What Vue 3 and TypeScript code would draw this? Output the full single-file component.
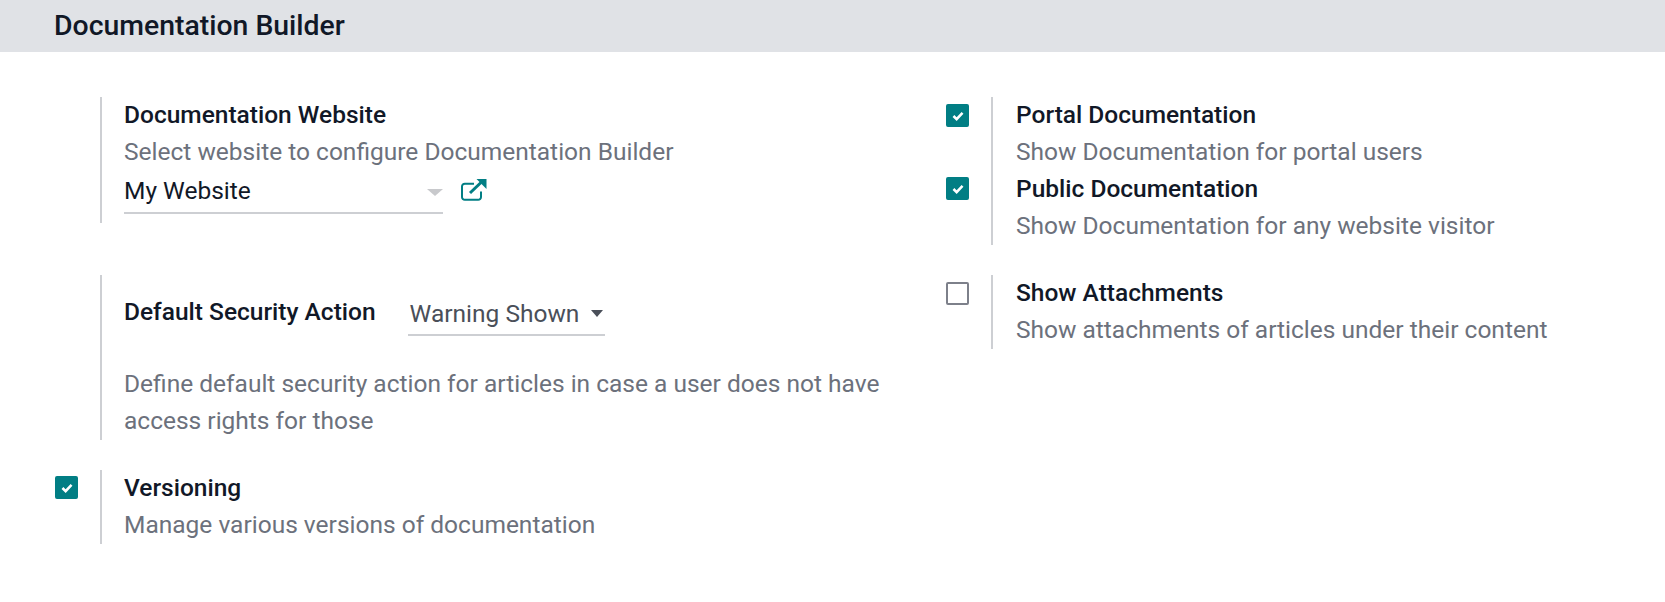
<script setup lang="ts">
interface Setting {
  label: string;
  help: string;
  checked: boolean;
}

const portalSettings: Setting[] = [
  { label: "Portal Documentation", help: "Show Documentation for portal users", checked: true },
  { label: "Public Documentation", help: "Show Documentation for any website visitor", checked: true },
];
</script>

<template>
  <div class="page">
    <h2 class="section-title">Documentation Builder</h2>
    <div class="settings">
      <div class="box">
        <div class="side"></div>
        <div class="right">
          <div class="label">Documentation Website</div>
          <div class="help">Select website to configure Documentation Builder</div>
          <div class="website-row">
            <div class="select website-select">
              <span>My Website</span>
              <span class="caret caret-light"></span>
            </div>
            <svg class="ext-link" width="26" height="22" viewBox="0 0 26 22">
              <path d="M20 12.500v5.500a2.800 2.800 0 0 1-2.800 2.800H3.800A2.800 2.800 0 0 1 1 18V7.500a2.800 2.800 0 0 1 2.800-2.800H13" fill="none" stroke="#017e84" stroke-width="2" />
              <path d="M9 14 20 3.500" fill="none" stroke="#017e84" stroke-width="3" />
              <path d="M15.500 0H25.500V10z" fill="#017e84" />
            </svg>
          </div>
        </div>
      </div>

      <div class="box">
        <div class="side"></div>
        <div class="right stack">
          <div v-for="s in portalSettings" :key="s.label" class="stack-item">
            <span class="check on stack-check"><svg width="12" height="10" viewBox="0 0 13 11"><path d="M1.500 5.500 5 9l6.500-7" fill="none" stroke="#fff" stroke-width="2.800" /></svg></span>
            <div class="label">{{ s.label }}</div>
            <div class="help">{{ s.help }}</div>
          </div>
        </div>
      </div>

      <div class="box">
        <div class="side"></div>
        <div class="right security">
          <div class="security-row">
            <div class="label">Default Security Action</div>
            <div class="select security-select">
              <span>Warning Shown</span>
              <span class="caret"></span>
            </div>
          </div>
          <div class="help security-help">Define default security action for articles in case a user does not have access rights for those</div>
        </div>
      </div>

      <div class="box">
        <div class="side"><span class="check"></span></div>
        <div class="right">
          <div class="label">Show Attachments</div>
          <div class="help">Show attachments of articles under their content</div>
        </div>
      </div>

      <div class="box versioning">
        <div class="side"><span class="check on"><svg width="12" height="10" viewBox="0 0 13 11"><path d="M1.500 5.500 5 9l6.500-7" fill="none" stroke="#fff" stroke-width="2.800" /></svg></span></div>
        <div class="right">
          <div class="label">Versioning</div>
          <div class="help">Manage various versions of documentation</div>
        </div>
      </div>
    </div>
  </div>
</template>

<style scoped>
.page {
  width: 1665px;
  height: 602px;
  overflow: hidden;
  background: #fff;
  font-family: Roboto, "Liberation Sans", sans-serif;
  font-size: 24.500px;
  line-height: 37px;
  color: #4a4f59;
}
.section-title {
  margin: 0;
  height: 52px;
  padding-left: 54px;
  background: #e0e2e6;
  font-size: 28.400px;
  font-weight: 500;
  line-height: 52px;
  color: #111827;
}
.settings {
  display: grid;
  grid-template-columns: 891px 1fr;
  row-gap: 30px;
  align-items: start;
  padding: 45px 0 0 55px;
}
.box {
  display: flex;
}
.box:nth-child(even) .right {
  padding-left: 23px;
}
.side {
  width: 45px;
  flex: none;
  padding-top: 7px;
}
.versioning .side {
  padding-top: 6px;
}
.right {
  border-left: 2px solid #cdcfd3;
  padding-left: 22px;
  padding-bottom: 1px;
  width: 785px;
}
.right > :first-child {
  margin-top: -1px;
}
.label {
  font-weight: 500;
  color: #111827;
}
.help {
  color: #6c717c;
}
.check {
  display: flex;
  align-items: center;
  justify-content: center;
  box-sizing: border-box;
  width: 23px;
  height: 23px;
  border: 2px solid #7d808a;
  border-radius: 2px;
  background: #fff;
}
.check.on {
  background: #017e84;
  border-color: #017e84;
}
.stack {
  position: relative;
}
.stack-check {
  position: absolute;
  left: -47px;
  margin-top: 7px;
}
.stack-item:first-child .stack-check {
  margin-top: 8px;
}
.website-row {
  display: flex;
  align-items: flex-start;
  padding-bottom: 8px;
}
.select {
  display: flex;
  align-items: center;
  justify-content: space-between;
  box-sizing: border-box;
  border-bottom: 2px solid #cdcfd3;
}
.website-select {
  width: 319px;
  height: 44px;
  color: #111827;
  padding: 2px 0 4px 0;
}
.ext-link {
  margin: 9px 0 0 18px;
}
.caret {
  width: 0;
  height: 0;
  border-left: 6px solid transparent;
  border-right: 6px solid transparent;
  border-top: 7px solid #4a4f59;
}
.caret-light {
  border-left-width: 8px;
  border-right-width: 8px;
  border-top-color: #c8c9cc;
  margin-top: 5px;
}
.security {
  height: 165px;
  box-sizing: border-box;
  padding-top: 19px;
}
.security-row {
  display: flex;
  align-items: flex-start;
}
.security-select {
  width: 197px;
  height: 39px;
  margin: 4px 0 0 32px;
  padding: 0 2px 4px 2px;
}
.security-help {
  margin-top: 29px;
}
</style>
